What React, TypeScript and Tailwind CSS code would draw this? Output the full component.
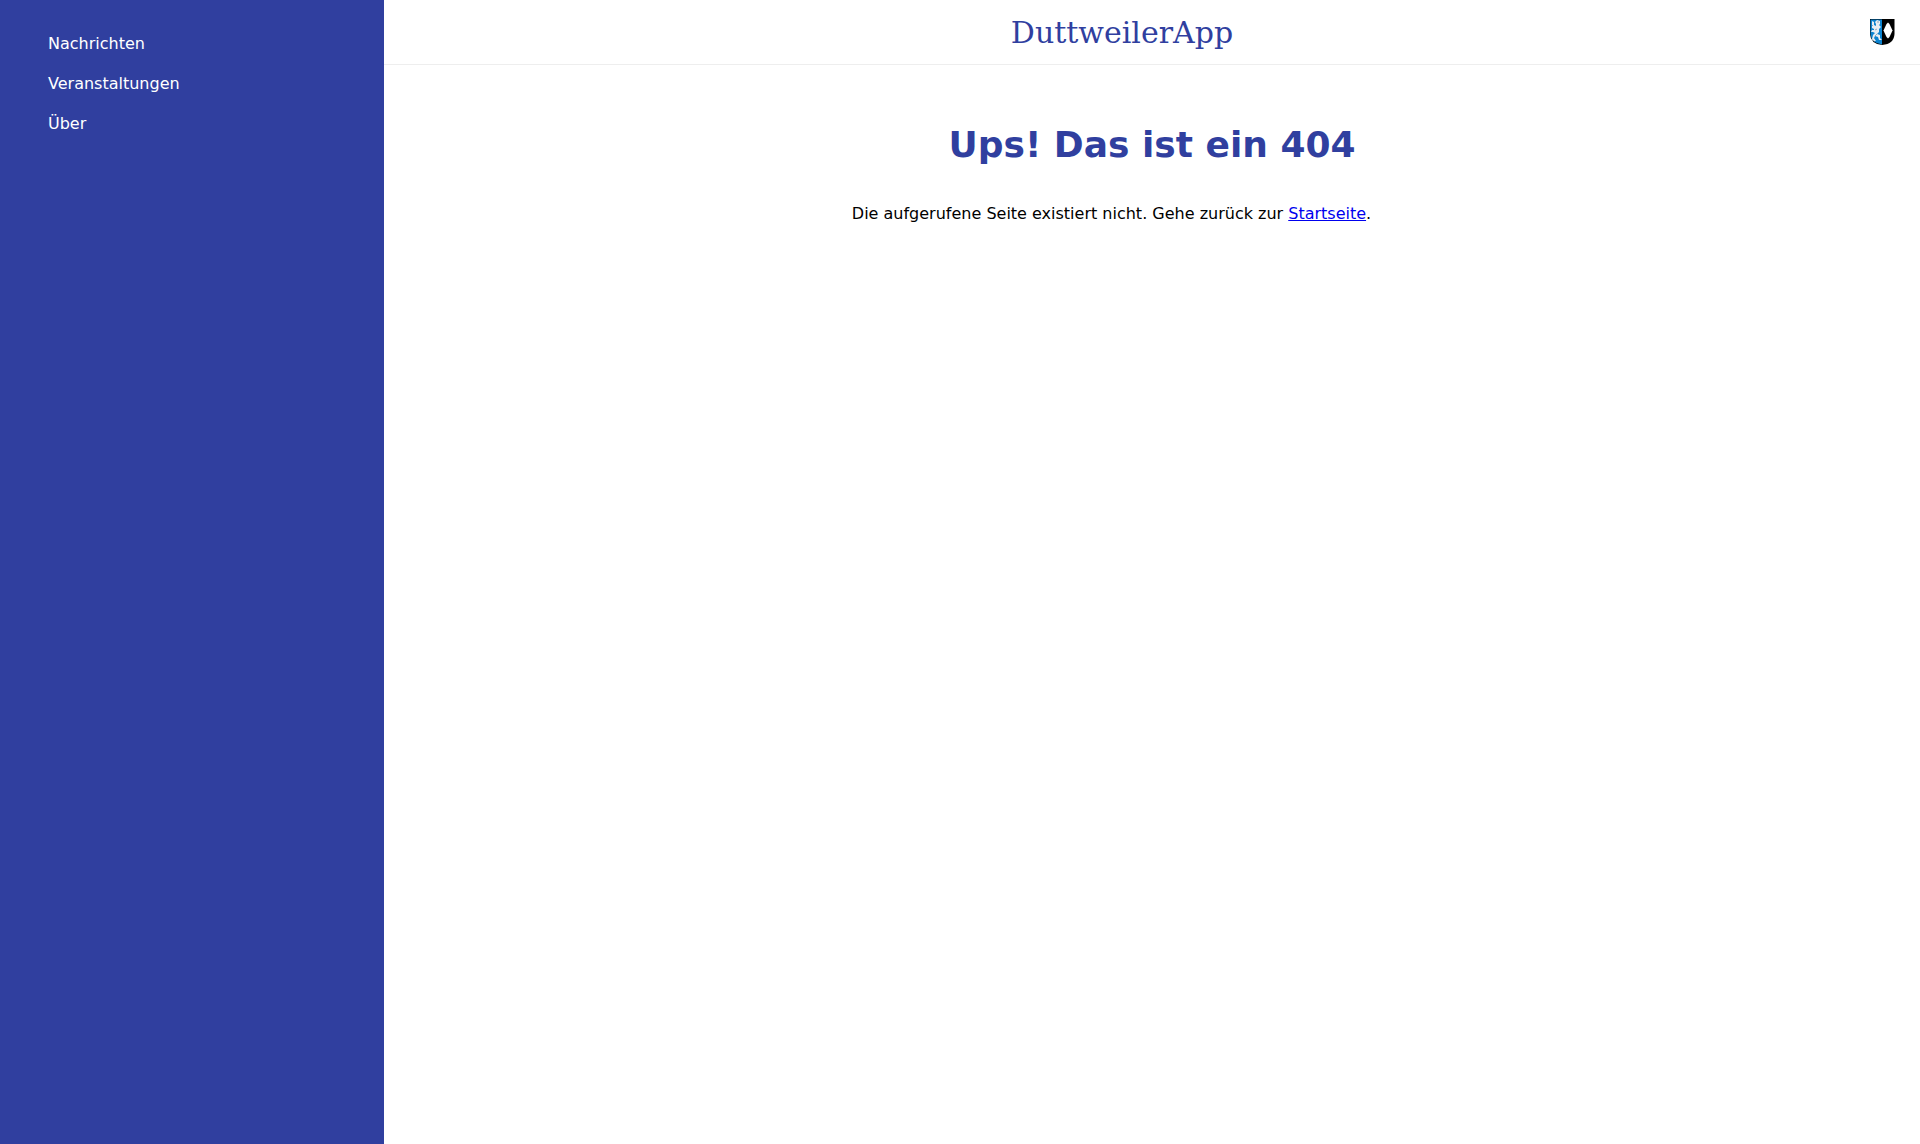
export default function App() {
  return (
    <div className="flex h-screen bg-white font-['DejaVu_Sans',sans-serif] text-base text-black">
      <aside className="w-96 shrink-0 bg-[#303f9f]">
        <nav className="flex flex-col gap-4 px-12 pt-8 text-white">
          <a href="#">Nachrichten</a>
          <a href="#">Veranstaltungen</a>
          <a href="#">Über</a>
        </nav>
      </aside>
      <div className="flex flex-1 flex-col">
        <header className="flex h-[65px] items-center border-b border-[#eee] pr-[25px]">
          <div className="flex-1 pt-0.5 pr-2.5 text-center font-['DejaVu_Serif',serif] text-3xl leading-none text-[#303f9f]">DuttweilerApp</div>
          <svg className="h-7 w-[25px]" viewBox="0 0 25 28">
            <path d="M0 1H24.5V16Q24 26 12.2 27Q0.5 26 0 16Z" />
            <path d="M0.5 1.5H12V26.5Q1 25 0.5 16Z" fill="#0c83cf" />
            <path d="M18 4.5L19.5 6L22.5 12.5L19.5 19L18 20.5L16.5 19L13.5 12.5L16.5 6Z" fill="white" />
            <path d="M2 3l2 1 0 3 2 1 0-2-1-2 2-2 3 1 0 3-1 1 2 2-2 2 0 3-2 2 3 1 0 3 2 2-3 0-1-3-3-1-1 2 2 3-3 0-1-2 1-4 2-2-2-1-2 0 1-2 2 0 0-1-2-1Z" fill="#e6edf3" />
            <path d="M2 7l1 1M7 4h2M5 12l2-1M7 16l-2 2M3 22l2 2" stroke="#607b90" strokeWidth="0.6" />
          </svg>
        </header>
        <main>
          <h1 className="mt-[60px] text-center text-4xl font-bold text-[#303f9f]">Ups! Das ist ein 404</h1>
          <p className="mt-[37px] pr-[81px] text-center">Die aufgerufene Seite existiert nicht. Gehe zurück zur <a className="text-[#0000ee] underline" href="#">Startseite</a>.</p>
        </main>
      </div>
    </div>
  );
}
